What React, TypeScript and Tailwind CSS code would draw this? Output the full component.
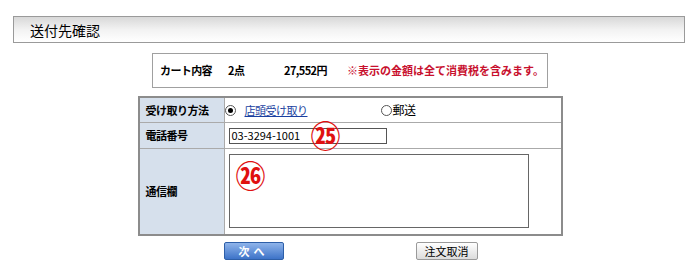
import React from "react";

const jp = { fontFamily: '"Noto Sans CJK JP", "Noto Sans", sans-serif' };

export default function App() {
  return (
    <div className="w-[700px] h-[265px] bg-white text-black overflow-hidden" style={jp}>
      <div className="pt-[16px] pl-[13px]">
        <div className="w-[672px] h-[27px] border border-[#9a9a9a] bg-gradient-to-b from-[#d8d8d8] via-[#f2f2f2] to-white flex items-center pl-[16px] text-[14px] leading-none">
          送付先確認
        </div>
      </div>

      <div className="flex flex-col items-center">
        <div className="mt-[10px] w-[396px] h-[35px] border border-[#a0a0a0] flex items-center text-[11px] font-bold tracking-[-0.6px] whitespace-nowrap">
          <span className="ml-[7px] w-[68px]">カート内容</span>
          <span className="w-[56px]">2点</span>
          <span className="w-[63px]">27,552円</span>
          <span className="text-[#c8102e] tracking-normal">※表示の金額は全て消費税を含みます。</span>
        </div>

        <div className="mt-[8px] w-[425px] border-2 border-[#8c8c8c] text-[11px] tracking-[-0.5px] whitespace-nowrap">
          <div className="flex h-[25px] border-b border-[#aaaaaa]">
            <div className="w-[85px] bg-[#d6e0ec] border-r border-[#aaaaaa] flex items-center pl-[6px] font-bold">受け取り方法</div>
            <div className="flex-1 flex items-center pl-[0px]">
              <span className="w-[11px] h-[11px] rounded-full border border-[#555] flex items-center justify-center bg-white">
                <span className="w-[5px] h-[5px] rounded-full bg-black" />
              </span>
              <span className="ml-[9px] text-[#1a3fa0] underline w-[136px]">店頭受け取り</span>
              <span className="w-[11px] h-[11px] rounded-full border border-[#555] bg-white" />
              <span className="ml-[1px] text-[12px]">郵送</span>
            </div>
          </div>
          <div className="flex h-[26px] border-b border-[#aaaaaa]">
            <div className="w-[85px] bg-[#d6e0ec] border-r border-[#aaaaaa] flex items-center pl-[6px] font-bold">電話番号</div>
            <div className="flex-1 flex items-center pl-[4px] relative">
              <div className="w-[158px] h-[16px] border border-[#555] flex items-center pl-[2px] text-[11px] tracking-normal">03-3294-1001</div>
              <span className="absolute left-[86px] top-[-4px] text-[#e01010] text-[30px] font-bold leading-none">㉕</span>
            </div>
          </div>
          <div className="flex h-[85px]">
            <div className="w-[85px] bg-[#d6e0ec] border-r border-[#aaaaaa] flex items-center pl-[6px] font-bold">通信欄</div>
            <div className="flex-1 pl-[4px] pt-[5px] relative">
              <div className="w-[300px] h-[74px] border border-[#666] bg-white" />
              <span className="absolute left-[11px] top-[10px] text-[#e01010] text-[30px] font-bold leading-none">㉖</span>
            </div>
          </div>
        </div>

        <div className="mt-[6px] w-[425px] flex items-center">
          <div className="ml-[86px] w-[60px] h-[18px] rounded-[2px] border border-[#2e5fa8] bg-gradient-to-b from-[#8fb4ea] to-[#3d73c8] text-white text-[11px] font-bold flex items-center justify-center tracking-[4px]">
            次へ
          </div>
          <div className="ml-[132px] w-[62px] h-[18px] rounded-[2px] border border-[#9a9a9a] bg-gradient-to-b from-white to-[#dcdcdc] text-[11px] flex items-center justify-center">
            注文取消
          </div>
        </div>
      </div>
    </div>
  );
}
